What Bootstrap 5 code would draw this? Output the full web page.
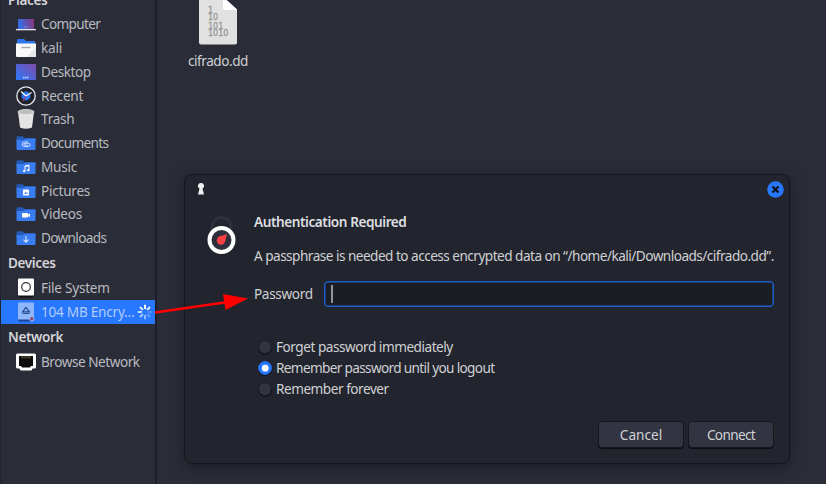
<!DOCTYPE html>
<html lang="en" data-bs-theme="dark">
<head>
<meta charset="utf-8">
<title>Authentication Required</title>
<meta name="viewport" content="width=device-width, initial-scale=1">
<link href="https://cdn.jsdelivr.net/npm/bootstrap@5.3.0/dist/css/bootstrap.min.css" rel="stylesheet">
<style>
body{width:826px;height:484px;background:#2a2c37;color:#cfd1d4;font:13.6px/18px "Noto Sans",sans-serif}
.places{width:157px;border-right:2px solid #1d1f28;border-left:1px solid #22242d;color:#b9bbc0;letter-spacing:-.25px}
.section-title{height:26.3px;padding-left:7px;font-weight:600;color:#d3d4d7;letter-spacing:-.4px}
.section-title.first{height:24.5px;margin-top:-12px}
.place{height:23.75px;padding-left:15px;gap:5px;white-space:nowrap}
.place svg{width:20px;height:20px;flex:none}
.place.selected{background:#2777ff;color:#b3cbf8}
.place .spin{width:20px;margin-left:-5px}
.snug{letter-spacing:-.47px}
.tight{letter-spacing:-.65px}
.file{width:100px;margin-left:11px}
.file svg{width:40px;height:46px}
.file-name{margin-top:6px}
.auth{left:184px;top:174px;width:606px;height:290px;background:#23252e;border:1px solid #15161c;border-radius:8px;box-shadow:0 3px 14px rgba(0,0,0,.35)}
.titlebar{height:28px;padding:0 5px 0 11px}
.message{padding:10px 15px 0 20px}
.lock{width:33px;margin-top:2px}
.details{margin-left:16px;min-width:0}
.heading{font-weight:600;color:#dedfe1;letter-spacing:-.44px}
.intro{margin-top:16px;letter-spacing:-.52px}
.field{margin-top:16px}
.field label{width:70px;flex:none;letter-spacing:-.35px}
.choices{margin:29px 0 0 4px}
.auth .form-control{height:26px;background:#1b1d25;border:1px solid #1e5fcd;border-radius:4px;box-shadow:inset 0 0 0 .5px #1e5fcd;padding:0 6px}
.caret{width:1.5px;height:18px;background:#94959a}
.choice{height:21px;gap:4px}
.choice .form-check-input{width:14px;height:14px;margin:0;background-color:#323541;border:1px solid #1c1e25;box-shadow:0 1px 0 #111217}
.choice .form-check-input:checked{background-color:#2777ff;border-color:#2369df;background-size:13px}
.actions{gap:4px;padding-right:15px;margin-top:22px}
.auth .btn{width:86px;height:27px;padding:0;background:#323541;border:1px solid #16171d;box-shadow:0 1px 0 #0d0e12;border-radius:4px;font-size:13.6px;line-height:18px;color:#cfd1d4}
.arrow{left:150px;top:285px;width:100px;height:35px}
</style>
<script src="https://cdn.jsdelivr.net/npm/bootstrap@5.3.0/dist/js/bootstrap.bundle.min.js" defer></script>
</head>
<body class="d-flex position-relative overflow-hidden m-0">
<svg width="0" height="0" class="position-absolute" aria-hidden="true">
<defs>
<linearGradient id="screen" x1="0" y1="0.2" x2="1" y2="0"><stop stop-color="#356ee8"/><stop offset="1" stop-color="#8e3478"/></linearGradient>
<linearGradient id="desk" x1="0" y1="1" x2="1" y2="0"><stop stop-color="#2c78fa"/><stop offset="1" stop-color="#7e4caa"/></linearGradient>
<symbol id="folder" viewBox="0 0 20 20"><path d="M.5 4.500q0-1.200 1.200-1.200h5L8.500 5h10q1 0 1 1v3H.5z" fill="#2459b5"/><path d="M.5 7h7l1.500-1.300h10.500v10.300q0 1-1 1h-17q-1 0-1-1z" fill="#3a7df2"/></symbol>
</defs></svg>
<nav class="places flex-shrink-0 d-flex flex-column">
<div class="section-title first d-flex align-items-center">Places</div>
<div class="place d-flex align-items-center"><svg viewBox="0 0 20 20"><path d="M2 5h16v10H2z" fill="url(#screen)"/><path d="M8 13h1.500m1 0h1.500" stroke="#aab" stroke-width=".8"/><path d="M0 15h20v1.300H0z" fill="#e8e8f0"/></svg><span class="tight">Computer</span></div>
<div class="place d-flex align-items-center"><svg viewBox="0 0 20 20"><path d="M1 6V2q0-1 1-1h6l2 2h8q1 0 1 1v3z" fill="#2d76ee"/><path d="M0 5.500h20v12.500q0 1-1 1H1q-1 0-1-1z" fill="#fafafa"/><path d="M20 9v9q0 1-1 1h-8z" fill="#e8e8e8"/><path d="M6 9.500h8" stroke="#aaa" stroke-width="1.500" stroke-linecap="round"/></svg><span>kali</span></div>
<div class="place d-flex align-items-center"><svg viewBox="0 0 20 20"><rect y="2" width="20" height="16" rx=".5" fill="url(#desk)"/><path d="M7 15.500h6" stroke="#c2d3ff" stroke-width="1.400" stroke-dasharray="1.500 .5"/></svg><span class="snug">Desktop</span></div>
<div class="place d-flex align-items-center"><svg viewBox="0 0 20 20"><circle cx="10" cy="10" r="9.200" fill="#20222b" stroke="#e7e8ea" stroke-width="1.300"/><circle cx="10" cy="10" r="4.400" fill="#2777ff"/><path d="M5 5.500l5 4.500 5.500-3.500" fill="none" stroke="#fff" stroke-width="1.300"/><path d="M10 10l-3 5.500" stroke="#b93657"/></svg><span>Recent</span></div>
<div class="place d-flex align-items-center"><svg viewBox="0 0 20 20"><path d="M2 2.500h16l-2 16q-6 2.500-12 0z" fill="#e4e4e4"/><ellipse cx="10" cy="3" rx="8" ry="2.500" fill="#bdbdbd" stroke="#e6e6e6" stroke-width=".8"/></svg><span>Trash</span></div>
<div class="place d-flex align-items-center"><svg viewBox="0 0 20 20"><use href="#folder"/><path d="M12 9H8.500a2.200 2.200 0 0 0 0 4.500h4a1.600 1.600 0 0 0 0-3.200H9a.9.900 0 0 0 0 1.900h3" fill="none" stroke="#dce8ff" stroke-width=".9"/></svg><span class="tight">Documents</span></div>
<div class="place d-flex align-items-center"><svg viewBox="0 0 20 20"><use href="#folder"/><path d="M9 13.500V9l4-.8V13M9 9.500l4-.8" fill="none" stroke="#fff"/><ellipse cx="8.200" cy="14" rx="1.300" ry="1" fill="#fff"/><ellipse cx="12.200" cy="13.200" rx="1.300" ry="1" fill="#fff"/></svg><span>Music</span></div>
<div class="place d-flex align-items-center"><svg viewBox="0 0 20 20"><use href="#folder"/><rect x="7" y="8.500" width="6" height="6" rx=".5" fill="#fff"/><path d="M8.200 12.800l1.400-2 .9 1.100.7-.7 1 1.600z" fill="#3a7df2"/></svg><span>Pictures</span></div>
<div class="place d-flex align-items-center"><svg viewBox="0 0 20 20"><use href="#folder"/><rect x="6" y="9" width="6" height="4.500" rx=".8" fill="#fff"/><path d="M11.500 11l2.500-1.500V13l-2.500-1z" fill="#fff"/></svg><span>Videos</span></div>
<div class="place d-flex align-items-center"><svg viewBox="0 0 20 20"><use href="#folder"/><path d="M10 8v6M7.500 11.700L10 14.200l2.500-2.500" fill="none" stroke="#d5e4ff" stroke-width="1.100"/></svg><span class="tight">Downloads</span></div>
<div class="section-title d-flex align-items-center">Devices</div>
<div class="place d-flex align-items-center"><svg viewBox="0 0 20 20"><path d="M3 17h14v2.500H3z" fill="#111"/><rect x="2" y=".5" width="16" height="17" rx="1" fill="#fff"/><circle cx="10" cy="9" r="4.300" fill="none" stroke="#333" stroke-width="1.200"/></svg><span>File System</span></div>
<div class="place selected d-flex align-items-center"><svg viewBox="0 0 20 20"><path d="M2.500 17h12v2.500h-12z" fill="#1c4595"/><rect x="2" y=".5" width="16" height="17" rx="1" fill="#8fb7fc"/><path d="M6.500 9.800L10 5.500l3.500 4.300zM6.500 11.500h7" fill="none" stroke="#2a4e94" stroke-width="1.200"/><circle cx="15.800" cy="16.800" r="2.300" fill="#864975" stroke="#a5c3fa"/></svg><span>104 MB Encry…</span><svg viewBox="0 0 20 20" class="spin" fill="none" stroke="#fff" stroke-width="2"><path d="M10 7V2.800"/><path d="M7.900 7.900L5 5" opacity=".85"/><path d="M7 10H2.800" opacity=".75"/><path d="M7.900 12.100L5 15" opacity=".65"/><path d="M10 13v4.200" opacity=".5"/><path d="M12.100 12.100L15 15" opacity=".3"/><path d="M13 10h4.200" opacity=".2"/><path d="M12.100 7.900L15 5" opacity=".9"/></svg></div>
<div class="section-title d-flex align-items-center">Network</div>
<div class="place d-flex align-items-center"><svg viewBox="0 0 20 20"><path d="M1.500 1.500h17q1.500 0 1.500 1.500v12q0 1.500-1.500 1.500h-2l-1 2h-11l-1-2h-2Q0 16.500 0 15V3q0-1.500 1.500-1.500z" fill="#fff"/><path d="M3 4h14v10h-2l-1 1.500H6L5 14H3z" fill="#0b0b0b"/><path d="M6 4v2.500m2-2.500v2.500m2-2.500v2.500m2-2.500v2.500m2-2.500v2.500" stroke="#87764b" stroke-width=".8"/></svg><span class="snug">Browse Network</span></div>
</nav>
<main class="flex-grow-1">
<div class="file text-center">
<svg viewBox="0 0 40 46" class="d-block mx-auto"><path d="M1 0h24l14 10v32.500q0 2-2 2H3q-2 0-2-2z" fill="#e1e1e1"/><path d="M25 0h4l10 9v1H27q-2 0-2-2z" fill="#fff"/><path d="M29 0h11v10z" fill="#2a2c37"/><g font-family="DejaVu Sans" font-size="8" letter-spacing="0" stroke="#999" stroke-width=".3" fill="#999"><text x="10" y="12.500">1</text><text x="10" y="20">10</text><text x="10" y="28.500">101</text><text x="10" y="36">1010</text></g></svg>
<div class="file-name snug">cifrado.dd</div>
</div>
</main>
<section class="auth position-absolute" role="dialog" aria-label="Authentication Required">
<div class="titlebar d-flex align-items-center justify-content-between">
<svg width="10" height="14" viewBox="0 0 10 14"><path d="M5 1a2.900 2.900 0 0 1 1.500 5.500L8 12.500H2l1.500-6A2.900 2.900 0 0 1 5 1z" fill="#eee"/></svg>
<svg width="17" height="17" viewBox="0 0 17 17"><circle cx="8.500" cy="8.500" r="8.300" fill="#2777ff"/><path d="M5.500 5.500l6 6m0-6l-6 6" stroke="#10131b" stroke-width="2.200"/></svg>
</div>
<div class="message d-flex align-items-start">
<svg class="lock flex-shrink-0" height="40" viewBox="0 0 33 40"><path d="M7 18v-6a9.500 9.500 0 0 1 19 0v6" fill="none" stroke="#2e313c" stroke-width="3"/><circle cx="16.500" cy="25" r="12" fill="#2d303c" stroke="#fff" stroke-width="4"/><circle cx="16" cy="25.500" r="4.200" fill="#ff4045"/><path d="M13.500 22l8.500-3-2 7.500z" fill="#ff4045"/></svg>
<div class="details flex-grow-1">
<div class="heading">Authentication Required</div>
<p class="intro mb-0 text-nowrap">A passphrase is needed to access encrypted data on “/home/kali/Downloads/cifrado.dd”.</p>
<div class="d-flex align-items-center field"><label for="pass">Password</label><div id="pass" class="form-control d-flex align-items-center"><span class="caret"></span></div></div>
<div class="choices">
<label class="choice d-flex align-items-center"><input class="form-check-input" type="radio" name="keep"><span class="snug">Forget password immediately</span></label>
<label class="choice d-flex align-items-center"><input class="form-check-input" type="radio" name="keep" checked><span class="tight">Remember password until you logout</span></label>
<label class="choice d-flex align-items-center"><input class="form-check-input" type="radio" name="keep"><span class="snug">Remember forever</span></label>
</div>
</div>
</div>
<div class="actions d-flex justify-content-end"><button class="btn" type="button">Cancel</button><button class="btn tight" type="button">Connect</button></div>
</section>
<svg class="arrow position-absolute" viewBox="0 0 100 35" aria-hidden="true"><path d="M5 27.500L78 17" stroke="#f00" stroke-width="2.700"/><path d="M73 9l25 4.500L75.500 25z" fill="#f00"/></svg>
</body>
</html>
